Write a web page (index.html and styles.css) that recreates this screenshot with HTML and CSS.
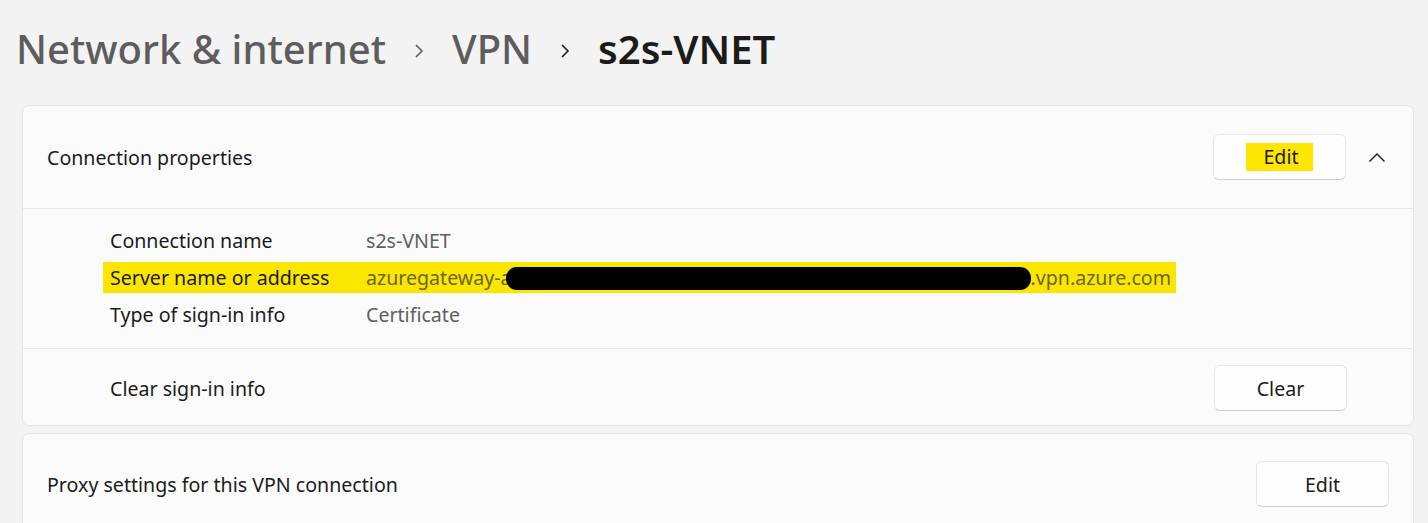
FILE: index.html
```html
<!DOCTYPE html>
<html>
<head>
    <title>VPN - s2s-VNET</title>
    <link rel="stylesheet" href="styles.css">
</head>
<body>
    <div class="page">
        <h1 class="breadcrumb">
            <span class="crumb">Network &amp; internet</span>
            <svg class="crumb-sep" width="10" height="16" viewBox="0 0 10 16"><polyline points="2,2 8,8 2,14" fill="none" stroke="#5d5d5d" stroke-width="1.6"/></svg>
            <span class="crumb">VPN</span>
            <svg class="crumb-sep" width="10" height="16" viewBox="0 0 10 16"><polyline points="2,2 8,8 2,14" fill="none" stroke="#1b1b1b" stroke-width="1.6"/></svg>
            <span class="crumb current">s2s-VNET</span>
        </h1>

        <div class="card">
            <div class="card-head">
                <span class="card-title">Connection properties</span>
                <button class="btn"><span class="marker">Edit</span></button>
                <svg class="chevron" width="18" height="11" viewBox="0 0 18 11"><polyline points="1.5,9.5 9,2 16.5,9.5" fill="none" stroke="#1b1b1b" stroke-width="1.4"/></svg>
            </div>
            <div class="details">
                <div class="detail-row">
                    <span class="detail-label">Connection name</span>
                    <span class="detail-value">s2s-VNET</span>
                </div>
                <div class="detail-row">
                    <span class="row-marker">
                        <span class="detail-label">Server name or address</span>
                        <span class="detail-value">azuregateway-a<span class="redact"></span>.vpn.azure.com</span>
                    </span>
                </div>
                <div class="detail-row">
                    <span class="detail-label">Type of sign-in info</span>
                    <span class="detail-value">Certificate</span>
                </div>
            </div>
            <div class="clear-row">
                <span>Clear sign-in info</span>
                <button class="btn">Clear</button>
            </div>
        </div>

        <div class="card second">
            <div class="proxy-row">
                <span class="card-title">Proxy settings for this VPN connection</span>
                <button class="btn">Edit</button>
            </div>
        </div>
    </div>
</body>
</html>
```

FILE: styles.css
```css
body {
    margin: 0;
    background: #f3f3f3;
    font-family: "Noto Sans", "Open Sans", sans-serif;
    color: #1b1b1b;
    overflow: hidden;
}

.page {
    padding: 0 14px 0 22px;
}

.breadcrumb {
    display: flex;
    align-items: center;
    margin: 0 0 27px -6px;
    padding-top: 18px;
    height: 60px;
    font-size: 40px;
    font-weight: 500;
    color: #5d5d5d;
}

.crumb-sep {
    margin: 6px 28px 0 28px;
}

.crumb.current {
    font-weight: 600;
    color: #1b1b1b;
}

.card {
    background: #fbfbfb;
    border: 1px solid #e5e5e5;
    border-radius: 7px;
}

.card.second {
    margin-top: 7px;
    height: 120px;
}

.card-head {
    display: flex;
    align-items: center;
    height: 102px;
    padding-left: 24px;
    border-bottom: 1px solid #e5e5e5;
}

.card-title {
    flex: 1;
    font-size: 19.6px;
}

.btn {
    width: 133px;
    height: 46px;
    font-family: inherit;
    font-size: 19.6px;
    color: #1b1b1b;
    background: #fefefe;
    border: 1px solid #e5e5e5;
    border-bottom-color: #cfcfcf;
    border-radius: 6px;
    padding: 0;
}

.marker {
    display: inline-block;
    line-height: 28px;
    padding: 0 14px 0 17px;
    background: #ffe600;
}

.chevron {
    margin: 0 27px 0 22px;
}

.details {
    padding: 13px 0 15px 87px;
    border-bottom: 1px solid #e5e5e5;
}

.detail-row {
    display: flex;
    align-items: center;
    height: 37px;
    font-size: 19.6px;
}

.detail-label {
    display: inline-block;
    width: 256px;
}

.detail-value {
    color: #5f5f5f;
}

.row-marker {
    display: flex;
    align-items: center;
    height: 31px;
    margin-left: -7px;
    padding: 0 5px 0 7px;
    background: #fbe600;
}

.row-marker .detail-value {
    color: #6b6520;
}

.redact {
    display: inline-block;
    width: 525px;
    height: 23px;
    margin-left: -6px;
    vertical-align: -5px;
    background: #000;
    border-radius: 11px;
}

.clear-row {
    display: flex;
    align-items: center;
    justify-content: space-between;
    height: 74px;
    padding: 2px 66px 0 87px;
    font-size: 19.6px;
}

.proxy-row {
    display: flex;
    align-items: center;
    height: 100px;
    padding: 0 24px 0 24px;
}
```
